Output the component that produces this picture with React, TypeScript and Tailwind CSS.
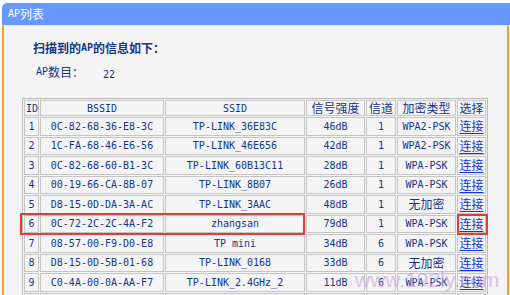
import React from "react";

const MONO = { fontFamily: "'DejaVu Sans Mono', 'Noto Sans CJK SC', monospace" };
const CJK = { fontFamily: "'Noto Sans CJK SC', sans-serif" };

type Row = {
  id: string;
  bssid: string;
  ssid: string;
  signal: string;
  channel: string;
  security: string;
};

const rows: Row[] = [
  { id: "1", bssid: "0C-82-68-36-E8-3C", ssid: "TP-LINK_36E83C", signal: "46dB", channel: "1", security: "WPA2-PSK" },
  { id: "2", bssid: "1C-FA-68-46-E6-56", ssid: "TP-LINK_46E656", signal: "42dB", channel: "1", security: "WPA2-PSK" },
  { id: "3", bssid: "0C-82-68-60-B1-3C", ssid: "TP-LINK_60B13C11", signal: "28dB", channel: "1", security: "WPA-PSK" },
  { id: "4", bssid: "00-19-66-CA-8B-07", ssid: "TP-LINK_8B07", signal: "26dB", channel: "1", security: "WPA-PSK" },
  { id: "5", bssid: "D8-15-0D-DA-3A-AC", ssid: "TP-LINK_3AAC", signal: "48dB", channel: "1", security: "无加密" },
  { id: "6", bssid: "0C-72-2C-2C-4A-F2", ssid: "zhangsan", signal: "79dB", channel: "1", security: "WPA-PSK" },
  { id: "7", bssid: "08-57-00-F9-D0-E8", ssid: "TP mini", signal: "34dB", channel: "6", security: "WPA-PSK" },
  { id: "8", bssid: "D8-15-0D-5B-01-68", ssid: "TP-LINK_0168", signal: "33dB", channel: "6", security: "无加密" },
  { id: "9", bssid: "C0-4A-00-0A-AA-F7", ssid: "TP-LINK_2.4GHz_2", signal: "11dB", channel: "6", security: "WPA-PSK" },
];

const cell = "border border-[#c4c4c4] p-0 text-center align-middle whitespace-nowrap";

function Ascii({ children }: { children: React.ReactNode }) {
  return (
    <span className="text-[10px]" style={MONO}>
      {children}
    </span>
  );
}

function Han({ children }: { children: React.ReactNode }) {
  return (
    <span className="text-[12px]" style={CJK}>
      {children}
    </span>
  );
}

function Security({ value }: { value: string }) {
  return value === "无加密" ? <Han>{value}</Han> : <Ascii>{value}</Ascii>;
}

export default function App() {
  return (
    <div className="relative w-[510px] h-[295px] overflow-hidden bg-white pt-[3px] text-[#15348c]">
      {/* title bar */}
      <div className="ml-[2px] h-[22px] bg-[#6699ff] rounded-tl-[5px] pl-[6px] flex items-center text-white leading-none">
        <Ascii>AP</Ascii>
        <Han>列表</Han>
      </div>

      <div className="ml-[2px] w-[507px] h-[300px] border-t border-t-[#dfe8ff] border-l-2 border-r-2 border-l-[#ff9a1a] border-r-[#ff9a1a] bg-[#f4f4f4]">
        <div className="mt-[14px] pl-[29px] h-[16px] flex items-center font-bold leading-none">
          <Han>扫描到的</Han>
          <span className="text-[10px] font-bold" style={MONO}>AP</span>
          <Han>的信息如下：</Han>
        </div>

        <div className="mt-[8px] pl-[32px] h-[16px] flex items-center leading-none">
          <Ascii>AP</Ascii>
          <Han>数目：</Han>
          <span className="ml-[19px]">
            <Ascii>22</Ascii>
          </span>
        </div>

        <div className="relative mt-[18px] ml-[18px] w-[466px]">
          <table className="table-fixed w-[466px] border-separate border-spacing-[1px] border border-[#b8b8b8] text-[10px] leading-none">
            <colgroup>
              <col className="w-[15px]" />
              <col className="w-[124px]" />
              <col className="w-[140px]" />
              <col className="w-[59px]" />
              <col className="w-[30px]" />
              <col className="w-[59px]" />
              <col className="w-[29px]" />
            </colgroup>
            <thead>
              <tr className="h-[16px]">
                <th className={`${cell} font-normal text-left pl-[1px]`}><Ascii>ID</Ascii></th>
                <th className={`${cell} font-normal`}><Ascii>BSSID</Ascii></th>
                <th className={`${cell} font-normal`}><Ascii>SSID</Ascii></th>
                <th className={`${cell} font-normal`}><Han>信号强度</Han></th>
                <th className={`${cell} font-normal`}><Han>信道</Han></th>
                <th className={`${cell} font-normal`}><Han>加密类型</Han></th>
                <th className={`${cell} font-normal`}><Han>选择</Han></th>
              </tr>
            </thead>
            <tbody>
              {rows.map((r) => (
                <tr key={r.id} className="h-[18.5px]">
                  <td className={cell}><Ascii>{r.id}</Ascii></td>
                  <td className={cell}><Ascii>{r.bssid}</Ascii></td>
                  <td className={cell}><span className="whitespace-pre"><Ascii>{r.ssid}</Ascii></span></td>
                  <td className={cell}><Ascii>{r.signal}</Ascii></td>
                  <td className={cell}><Ascii>{r.channel}</Ascii></td>
                  <td className={cell}><Security value={r.security} /></td>
                  <td className={cell}>
                    <a href="#" className="text-[#1034d8] underline underline-offset-2">
                      <Han>连接</Han>
                    </a>
                  </td>
                </tr>
              ))}
              <tr className="h-[18.5px]">
                <td className={cell}></td>
                <td className={cell}></td>
                <td className={cell}></td>
                <td className={cell}></td>
                <td className={cell}></td>
                <td className={cell}></td>
                <td className={cell}></td>
              </tr>
            </tbody>
          </table>

          {/* red annotation boxes */}
          <div className="absolute left-[-2px] top-[115px] w-[285px] h-[22px] border-2 border-[#e8383a] pointer-events-none" />
          <div className="absolute left-[435px] top-[116px] w-[31px] h-[21px] border-2 border-[#e8383a] pointer-events-none" />
        </div>
      </div>

      {/* watermark */}
      <div
        className="absolute left-[355px] top-[264px] text-[21px] text-[#c79ad8]/60 pointer-events-none"
        style={{ fontFamily: "'Liberation Sans', Arial, sans-serif" }}
      >
        www.192ly.com
      </div>
    </div>
  );
}
